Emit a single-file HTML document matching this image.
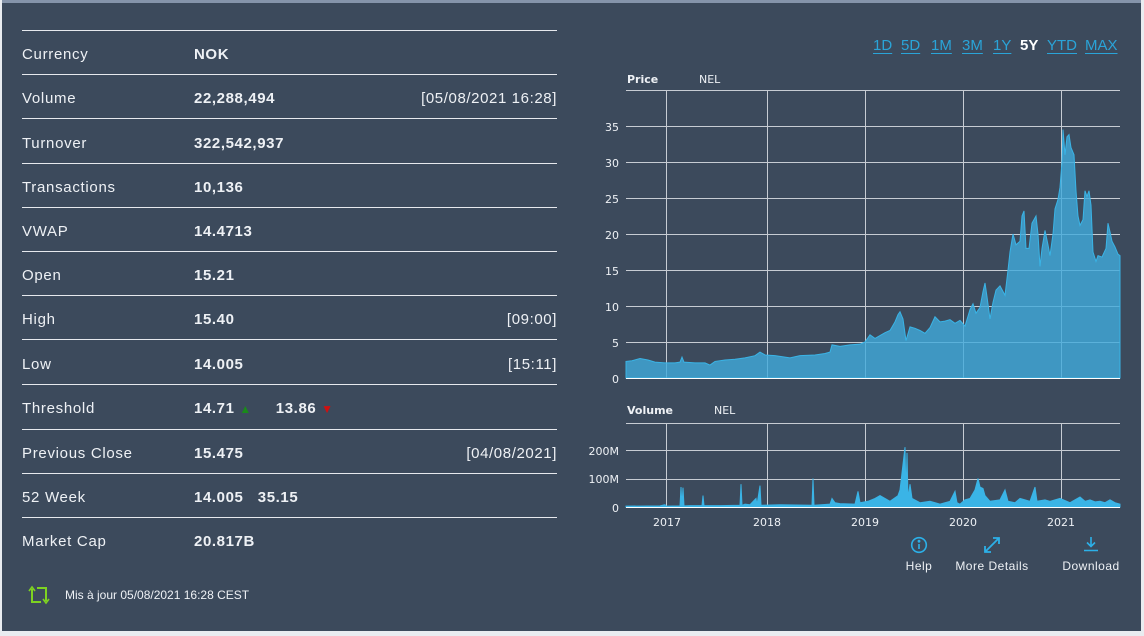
<!DOCTYPE html>
<html><head><meta charset="utf-8"><style>
*{margin:0;padding:0;box-sizing:border-box}
body{width:1144px;height:636px;background:#e9ecf0;position:relative;overflow:hidden;font-family:"Liberation Sans",sans-serif}
#p{position:absolute;left:2px;top:0;width:1139px;height:631px;background:#3c4a5c;border-top:3px solid #8594aa}
.ln{position:absolute;left:22px;width:535px;height:1px;background:#e6e9ee}
.r{position:absolute;left:22px;width:535px;height:20px;color:#eef1f5;font-size:15px;line-height:20px}
.r .l{position:absolute;left:0;letter-spacing:.7px}
.r .v{position:absolute;left:172px;font-weight:bold;letter-spacing:.6px}
.r .d{position:absolute;right:0;letter-spacing:.6px}
.tb{position:absolute;top:37px;font-size:15px;color:#2aa4d8;text-decoration:underline;text-underline-offset:3px}
.act{color:#fff;font-weight:bold;text-decoration:none}
.ft{position:absolute;color:#eef1f5;font-size:12px;text-align:center;letter-spacing:.5px}
</style></head><body>
<div id="p"></div>
<div class="ln" style="top:30px"></div>
<div class="ln" style="top:74px"></div>
<div class="ln" style="top:118px"></div>
<div class="ln" style="top:163px"></div>
<div class="ln" style="top:207px"></div>
<div class="ln" style="top:251px"></div>
<div class="ln" style="top:295px"></div>
<div class="ln" style="top:339px"></div>
<div class="ln" style="top:384px"></div>
<div class="ln" style="top:429px"></div>
<div class="ln" style="top:473px"></div>
<div class="ln" style="top:517px"></div>
<div class="r" style="top:45px"><span class="l">Currency</span><span class="v">NOK</span></div>
<div class="r" style="top:89px"><span class="l">Volume</span><span class="v">22,288,494</span><span class="d">[05/08/2021 16:28]</span></div>
<div class="r" style="top:134px"><span class="l">Turnover</span><span class="v">322,542,937</span></div>
<div class="r" style="top:178px"><span class="l">Transactions</span><span class="v">10,136</span></div>
<div class="r" style="top:222px"><span class="l">VWAP</span><span class="v">14.4713</span></div>
<div class="r" style="top:266px"><span class="l">Open</span><span class="v">15.21</span></div>
<div class="r" style="top:310px"><span class="l">High</span><span class="v">15.40</span><span class="d">[09:00]</span></div>
<div class="r" style="top:355px"><span class="l">Low</span><span class="v">14.005</span><span class="d">[15:11]</span></div>
<div class="r" style="top:399px"><span class="l">Threshold</span><span class="v">14.71 <span style="color:#1a8a1a;font-size:12px">&#9650;</span><span style="margin-left:24px">13.86</span> <span style="color:#d01010;font-size:12px">&#9660;</span></span></div>
<div class="r" style="top:444px"><span class="l">Previous Close</span><span class="v">15.475</span><span class="d">[04/08/2021]</span></div>
<div class="r" style="top:488px"><span class="l">52 Week</span><span class="v">14.005&nbsp;&nbsp;&nbsp;35.15</span></div>
<div class="r" style="top:532px"><span class="l">Market Cap</span><span class="v">20.817B</span></div>
<svg style="position:absolute;left:27px;top:585px" width="24" height="20" viewBox="0 0 24 20" fill="none" stroke="#7ed321" stroke-width="2"><path d="M5 4V17H14M19 16V3H10"/><path d="M2 6L5 2L8 6M16 14L19 18L22 14" stroke-width="1.6"/></svg>
<div style="position:absolute;left:65px;top:588px;color:#eef1f5;font-size:12px">Mis à jour 05/08/2021 16:28 CEST</div>

<span class="tb" style="left:873px">1D</span>
<span class="tb" style="left:901px">5D</span>
<span class="tb" style="left:931px">1M</span>
<span class="tb" style="left:962px">3M</span>
<span class="tb" style="left:993px">1Y</span>
<span class="tb act" style="left:1020px">5Y</span>
<span class="tb" style="left:1047px">YTD</span>
<span class="tb" style="left:1085px">MAX</span>

<svg style="position:absolute;left:0;top:0" width="1144" height="636" font-family="DejaVu Sans,sans-serif" font-size="11" fill="#eef1f5">
<text x="627" y="83" font-weight="bold">Price</text><text x="699" y="83">NEL</text>
<g stroke="#c7ccd3" stroke-width="1">
<line x1="626" y1="90.5" x2="1120" y2="90.5"/><line x1="626" y1="126.5" x2="1120" y2="126.5"/><line x1="626" y1="162.5" x2="1120" y2="162.5"/><line x1="626" y1="198.5" x2="1120" y2="198.5"/><line x1="626" y1="234.5" x2="1120" y2="234.5"/><line x1="626" y1="270.5" x2="1120" y2="270.5"/><line x1="626" y1="306.5" x2="1120" y2="306.5"/><line x1="626" y1="342.5" x2="1120" y2="342.5"/>
<line x1="666.5" y1="90" x2="666.5" y2="378"/><line x1="767.5" y1="90" x2="767.5" y2="378"/><line x1="865.5" y1="90" x2="865.5" y2="378"/><line x1="963.5" y1="90" x2="963.5" y2="378"/><line x1="1061.5" y1="90" x2="1061.5" y2="378"/>
<line x1="626" y1="423.5" x2="1120" y2="423.5"/><line x1="626" y1="450.5" x2="1120" y2="450.5"/><line x1="626" y1="479.5" x2="1120" y2="479.5"/>
<line x1="666.5" y1="423" x2="666.5" y2="507"/><line x1="767.5" y1="423" x2="767.5" y2="507"/><line x1="865.5" y1="423" x2="865.5" y2="507"/><line x1="963.5" y1="423" x2="963.5" y2="507"/><line x1="1061.5" y1="423" x2="1061.5" y2="507"/>
</g>
<g transform="translate(0,378) scale(1,-7.2)">
<polygon fill="rgba(64,170,220,0.8)" stroke="#3ab4e6" stroke-width="1" vector-effect="non-scaling-stroke" points="626,0 626,2.3 632,2.4 640,2.7 648,2.5 655,2.2 665,2.1 675,2.1 680,2.2 682,2.9 684,2.2 695,2.1 705,2.1 710,1.8 715,2.3 725,2.5 735,2.6 745,2.8 755,3.1 760,3.6 765,3.2 775,3.1 790,2.8 800,3.1 815,3.2 825,3.4 830,3.6 832,4.6 840,4.4 850,4.6 860,4.7 865,5.0 870,6.0 875,5.5 880,5.9 885,6.3 890,6.6 895,7.8 898,8.8 900,9.2 903,8.2 906,5.2 910,7.1 915,6.9 920,6.6 925,6.2 930,7.0 935,8.5 940,7.8 945,7.9 950,8.1 955,7.6 960,8.0 965,7.2 970,9.5 973,10.3 976,9.0 980,9.8 983,12.0 985,13.2 987,11.3 990,8.2 993,10.5 996,12.2 1000,12.8 1005,11.5 1008,15 1010,17.5 1013,20 1016,18.5 1020,19 1022,22.5 1024,23.2 1026,18 1029,18 1032,21.5 1036,22.5 1038,20 1040,15.5 1042,18 1045,20.5 1048,18.5 1050,17 1053,20 1055,23.5 1058,24.8 1060,26.5 1062,30 1063,34.5 1065,31 1067,33.5 1069,33.8 1071,32 1074,31 1076,26 1078,22.5 1080,21.2 1083,22 1085,26 1087,25.2 1089,26 1091,24 1093,17.5 1096,16.2 1098,17 1102,16.8 1106,18 1108,21.5 1110,20.3 1112,19 1115,18.2 1118,17.2 1120,17 1120,0"/>
</g>
<line x1="626" y1="378.5" x2="1120" y2="378.5" stroke="#fff"/>
<g text-anchor="end"><text x="619" y="131">35</text><text x="619" y="167">30</text><text x="619" y="203">25</text><text x="619" y="239">20</text><text x="619" y="275">15</text><text x="619" y="311">10</text><text x="619" y="347">5</text><text x="619" y="383">0</text></g>
<text x="627" y="414" font-weight="bold">Volume</text><text x="714" y="414">NEL</text>
<g transform="translate(0,507) scale(1,-0.285)">
<polygon fill="#3ab4e6" stroke="#3ab4e6" stroke-width="1" vector-effect="non-scaling-stroke" points="626,0 626,3 660,4 665,8 666,3 680,4 681,70 682,4 683,68 684,4 690,5 702,5 703,40 704,5 720,5 740,6 741,80 742,6 745,10 750,8 756,30 757,8 760,75 761,6 780,8 812,6 813,100 814,6 830,10 832,30 835,15 840,12 855,10 858,55 860,15 868,20 875,30 880,40 885,30 890,20 898,40 900,60 905,210 906,40 907,190 908,30 910,80 912,30 920,15 930,20 940,10 950,20 955,55 957,15 960,10 965,25 970,30 975,60 978,100 980,70 983,65 985,40 990,20 1000,25 1005,60 1008,20 1015,15 1020,30 1025,25 1030,20 1035,70 1037,20 1045,25 1050,20 1060,30 1070,15 1080,35 1085,20 1090,25 1095,18 1100,20 1105,15 1110,25 1115,15 1120,10 1120,0"/>
</g>
<line x1="626" y1="507.5" x2="1120" y2="507.5" stroke="#fff"/>
<g text-anchor="end"><text x="619" y="455">200M</text><text x="619" y="483">100M</text><text x="619" y="512">0</text></g>
<g text-anchor="middle"><text x="667" y="526">2017</text><text x="767" y="526">2018</text><text x="865" y="526">2019</text><text x="963" y="526">2020</text><text x="1061" y="526">2021</text></g>
</svg>
<svg style="position:absolute;left:910px;top:536px" width="18" height="18" viewBox="0 0 18 18" fill="none" stroke="#2cb0e8" stroke-width="1.6"><circle cx="9" cy="9" r="7.3"/><line x1="9" y1="8" x2="9" y2="13"/><circle cx="9" cy="5.2" r=".6" fill="#2cb0e8"/></svg>
<svg style="position:absolute;left:982px;top:535px" width="20" height="20" viewBox="0 0 20 20" fill="none" stroke="#2cb0e8" stroke-width="1.8"><path d="M3 17L17 3M11 3H17V9M3 11V17H9"/></svg>
<svg style="position:absolute;left:1082px;top:535px" width="18" height="18" viewBox="0 0 18 18" fill="none" stroke="#2cb0e8" stroke-width="1.6"><path d="M9 2V11M5 7.5L9 11.5L13 7.5M2 15.5H16"/></svg>
<div class="ft" style="left:899px;top:559px;width:40px">Help</div>
<div class="ft" style="left:952px;top:559px;width:80px">More Details</div>
<div class="ft" style="left:1056px;top:559px;width:70px">Download</div>
</body></html>
